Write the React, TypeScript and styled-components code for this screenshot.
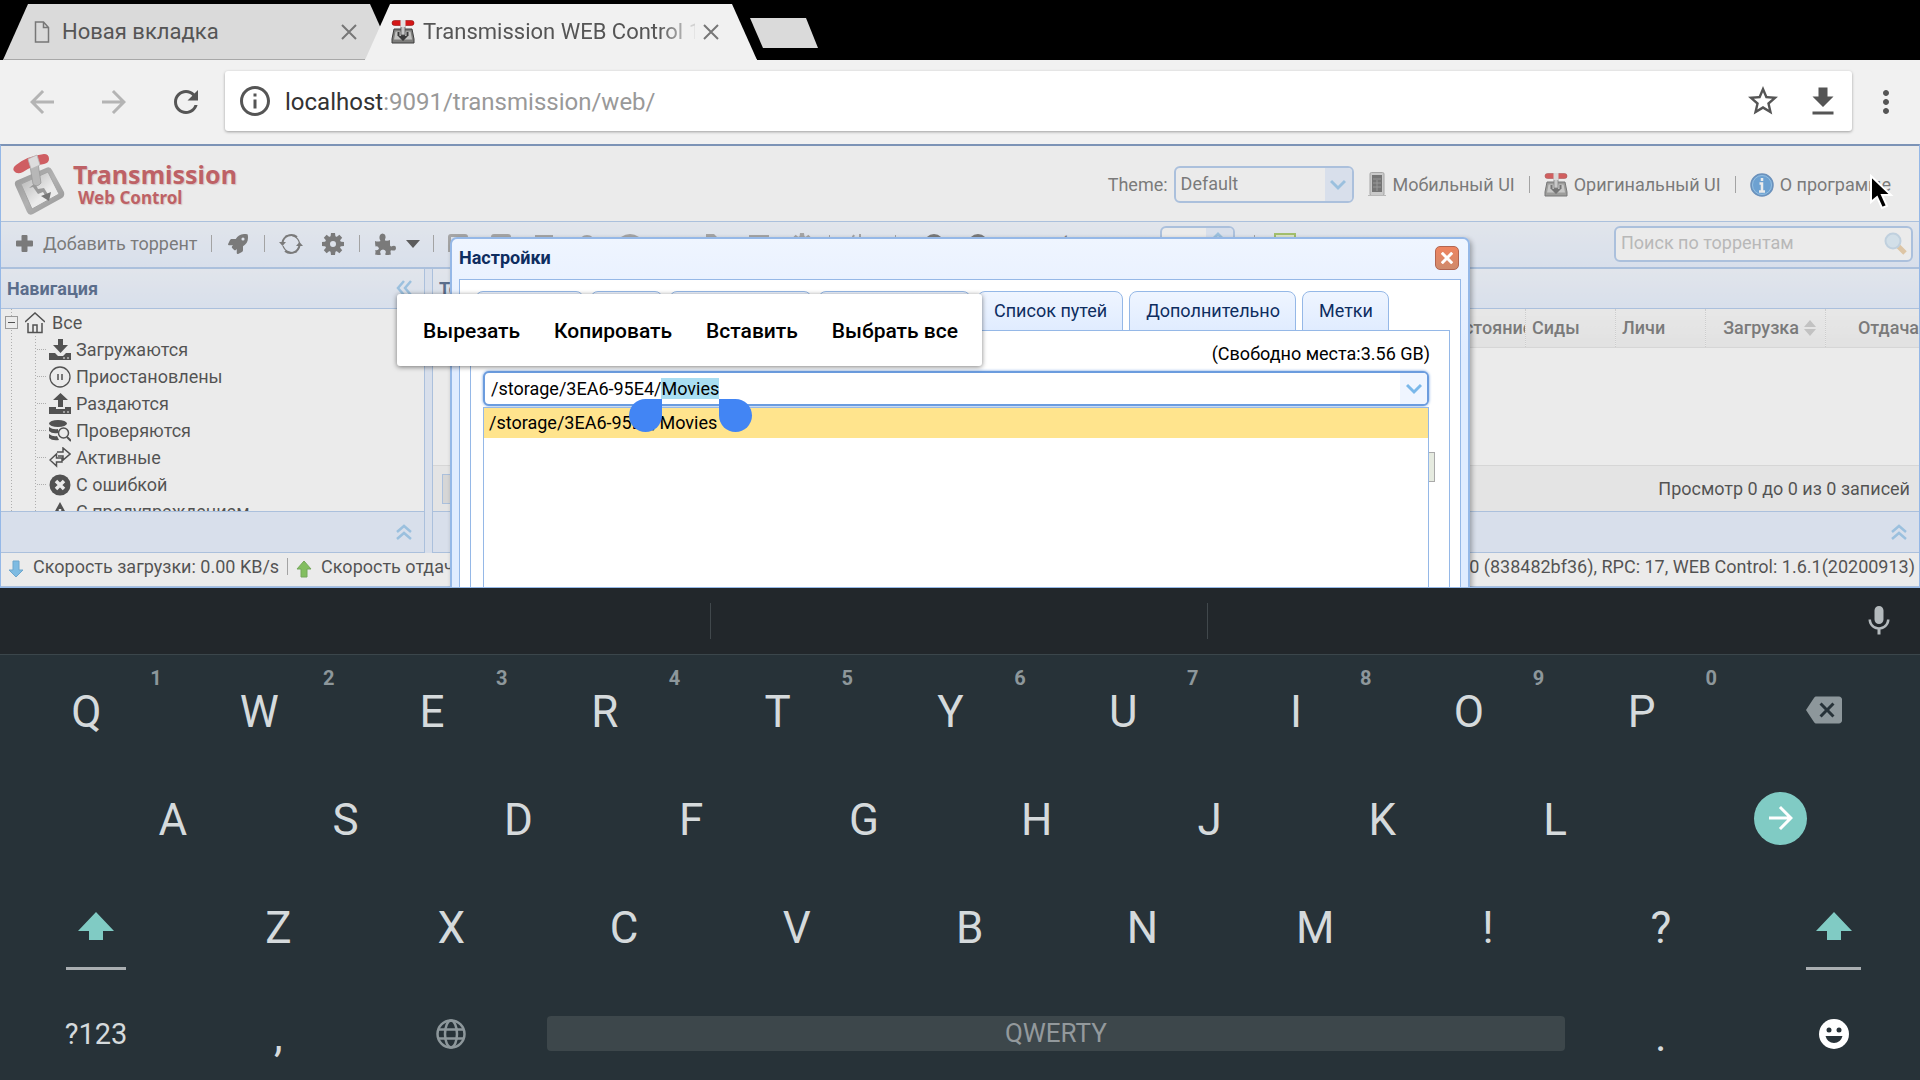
import React, { useEffect, useRef } from "react";
import styled, { createGlobalStyle, css } from "styled-components";
import { FaRocket } from "react-icons/fa";

const line = "#95b8e7";
const navy = "#0e2d5f";

const GlobalStyle = createGlobalStyle`
  * { box-sizing: border-box; }
  html, body { margin: 0; padding: 0; }
  body { font-family: Roboto, "Noto Sans", sans-serif; font-size: 18px; overflow: hidden; }
  button, input, select { font: inherit; color: inherit; }
  button { background: none; border: 0; padding: 0; margin: 0; }
  ul { list-style: none; margin: 0; padding: 0; }
  svg { display: block; flex: none; }
`;

const Screen = styled.div`
  height: 100vh;
  display: flex;
  flex-direction: column;
  position: relative;
  overflow: hidden;
`;

/* ---------- browser chrome ---------- */

const TabStrip = styled.div`
  height: 60px;
  flex: none;
  display: flex;
  align-items: flex-end;
  background: #000;
  padding-left: 3px;
`;

const BrowserTab = styled.div<{ $active?: boolean }>`
  width: 392px;
  height: 56px;
  display: flex;
  align-items: center;
  gap: ${(p) => (p.$active ? 8 : 12)}px;
  padding: 0 38px 0 ${(p) => (p.$active ? 26 : 31)}px;
  margin-left: ${(p) => (p.$active ? -30 : 0)}px;
  clip-path: polygon(25px 0, calc(100% - 25px) 0, 100% 100%, 0 100%);
  background: ${(p) => (p.$active ? "#f1f1f1" : "#dadada")};
  border-bottom: 1px solid ${(p) => (p.$active ? "#f1f1f1" : "#a8a8a8")};
  color: #555;
  font-size: 22px;
`;

const TabTitle = styled.span<{ $fade?: boolean }>`
  flex: 1;
  overflow: hidden;
  white-space: nowrap;
  line-height: 30px;
  ${(p) =>
    p.$fade &&
    css`
      mask-image: linear-gradient(90deg, #000 236px, rgba(0, 0, 0, 0.2) 268px);
    `}
`;

const NewTab = styled.button`
  width: 68px;
  height: 30px;
  margin: 0 0 12px -7px;
  background: #dadada;
  clip-path: polygon(0 0, 56px 0, 100% 100%, 13px 100%);
`;

const AddressBar = styled.div`
  height: 84px;
  flex: none;
  display: flex;
  align-items: center;
  background: #f1f1f1;
  padding-left: 24px;
  padding-right: 16px;
  color: #555;
`;

const NavButton = styled.button`
  width: 36px;
  height: 36px;
  margin-right: 36px;
  &:disabled { color: #b4b4b4; }
`;

const Omnibox = styled.div`
  flex: 1;
  height: 60px;
  margin: 0 16px 2px -15px;
  display: flex;
  align-items: center;
  gap: 24px;
  padding: 0 11px 0 12px;
  background: #fff;
  border-radius: 3px;
  box-shadow: 0 1px 3px rgba(0, 0, 0, 0.35);
`;

const Url = styled.span`
  flex: 1;
  margin-left: -12px;
  padding-top: 2px;
  font-size: 24px;
  color: #999;
  b { font-weight: 400; color: #333; }
`;

/* ---------- web page ---------- */

const Page = styled.main`
  flex: 1;
  min-height: 0;
  display: flex;
  flex-direction: column;
  position: relative;
  overflow: hidden;
  border: 1px solid ${line};
  border-top: 2px solid #7c93b6;
  background: #fff;
  color: #000;
`;

const Header = styled.header`
  height: 75px;
  flex: none;
  display: flex;
  align-items: center;
  padding: 2px 28px 0 12px;
  color: #444;
`;

const Brand = styled.div`
  flex: 1;
  display: flex;
  align-items: center;
  gap: 8px;
`;

const BrandText = styled.div`
  font-family: "Noto Sans", "Open Sans", sans-serif;
  font-weight: 700;
  color: #b41a22;
  text-shadow: 1px 1px 1px rgba(120, 0, 0, 0.25);
`;

const BrandName = styled.div`
  font-size: 25px;
  line-height: 26px;
`;

const BrandSub = styled.div`
  font-size: 17px;
  line-height: 22px;
  padding-left: 5px;
`;

const ThemeLabel = styled.label`
  margin-right: 6px;
`;

const SelectBox = styled.div`
  width: 180px;
  height: 37px;
  display: flex;
  border: 2px solid ${line};
  border-radius: 6px;
  overflow: hidden;
  background: #fff;
  margin-right: 14px;
`;

const PlainSelect = styled.select`
  flex: 1;
  appearance: none;
  border: 0;
  outline: 0;
  background: transparent;
  padding: 0 0 3px 5px;
`;

const ArrowCell = styled.span`
  width: 27px;
  flex: none;
  display: flex;
  align-items: center;
  justify-content: center;
  background: #e0ecff;
`;

const HeaderLink = styled.a`
  display: flex;
  align-items: center;
  gap: 6px;
  color: inherit;
  text-decoration: none;
`;

const Bar = styled.span<{ $gap?: number }>`
  width: 1px;
  height: 17px;
  margin: 0 ${(p) => p.$gap ?? 14}px;
  background: #888;
`;

const Toolbar = styled.div`
  height: 48px;
  flex: none;
  display: flex;
  align-items: center;
  padding: 0 6px 2px 15px;
  color: #444;
  border-top: 1px solid ${line};
  border-bottom: 2px solid ${line};
  background: linear-gradient(#eff5ff, #e0ecff);
`;

const ToolButton = styled.button<{ $w?: number }>`
  min-width: ${(p) => p.$w ?? 24}px;
  display: flex;
  align-items: center;
  justify-content: center;
  gap: 10px;
  white-space: nowrap;
`;

const GearSlot = styled(ToolButton)`
  margin-left: 18px;
`;

const FadedTools = styled.div`
  display: flex;
  align-items: center;
  gap: 21px;
  color: #8a8a8a;
`;

const RefreshGroup = styled.div`
  display: flex;
  align-items: center;
  flex: 1;
  gap: 18px;
  margin-left: 18px;
`;

const AutoLabel = styled.label`
  width: 135px;
  white-space: nowrap;
`;

const Spinner = styled.div`
  width: 75px;
  height: 35px;
  display: flex;
  border: 2px solid ${line};
  border-radius: 6px;
  background: #fff;
  overflow: hidden;
  input {
    width: 44px;
    border: 0;
    outline: 0;
    text-align: center;
    background: transparent;
  }
`;

const StepCell = styled.span`
  flex: 1;
  padding: 3px 0 0 4px;
  background: #e0ecff;
`;

const SearchBox = styled.div`
  width: 299px;
  height: 36px;
  display: flex;
  align-items: center;
  border: 2px solid ${line};
  border-radius: 6px;
  background: #fff;
  padding: 0 4px 0 5px;
  input {
    flex: 1;
    min-width: 0;
    border: 0;
    outline: 0;
    padding: 0 0 2px;
    background: transparent;
  }
  input::placeholder { color: #aaa; opacity: 1; }
`;

const Columns = styled.div`
  flex: 1;
  min-height: 0;
  display: flex;
  background: #e0ecff;
`;

const Column = styled.section`
  display: flex;
  flex-direction: column;
  min-width: 0;
  background: #fff;
`;

const NavColumn = styled(Column)`
  width: 424px;
  flex: none;
  margin-right: 7px;
  border-right: 1px solid ${line};
`;

const MainColumn = styled(Column)`
  flex: 1;
  border-left: 1px solid ${line};
`;

const PanelTitle = styled.h2`
  margin: 0;
  height: 40px;
  flex: none;
  display: flex;
  align-items: center;
  justify-content: space-between;
  padding: 0 12px 1px 6px;
  font-size: 18px;
  font-weight: 700;
  color: ${navy};
  background: linear-gradient(#eff5ff, #e0ecff);
  border-bottom: 1px solid ${line};
`;

const CollapsedPanel = styled.div`
  height: 42px;
  flex: none;
  display: flex;
  align-items: center;
  justify-content: flex-end;
  padding-right: 12px;
  background: #e0ecff;
  border-top: 1px solid ${line};
  border-bottom: 1px solid ${line};
`;

const Tree = styled.ul`
  flex: 1;
  min-height: 0;
  overflow: hidden;
  background:
    repeating-linear-gradient(#999 0 1px, transparent 1px 3px) 10px 0 / 1px 100% no-repeat,
    repeating-linear-gradient(#999 0 1px, transparent 1px 3px) 34px 27px / 1px 100% no-repeat;
`;

const TreeRow = styled.li<{ $root?: boolean }>`
  height: 27px;
  display: flex;
  align-items: center;
  gap: ${(p) => (p.$root ? 7 : 5)}px;
  padding-left: ${(p) => (p.$root ? 4 : 36)}px;
  white-space: nowrap;
`;

const Toggle = styled.button`
  width: 13px;
  height: 13px;
  border: 1px solid #777;
  background: #fff;
  display: flex;
  align-items: center;
  justify-content: center;
  &::before { content: ""; width: 7px; height: 1px; background: #000; }
`;

const Dots = styled.span`
  width: 9px;
  margin-right: -2px;
  border-top: 1px dotted #999;
`;

const GridArea = styled.div`
  flex: 1;
  min-height: 0;
  overflow: hidden;
`;

const Grid = styled.table`
  width: calc(100% + 27px);
  table-layout: fixed;
  border-collapse: collapse;
  color: #444;
`;

const Th = styled.th<{ $w?: number; $right?: boolean }>`
  width: ${(p) => (p.$w ? p.$w + "px" : "auto")};
  height: 38px;
  padding: 0 ${(p) => (p.$right ? 9 : 0)}px 0 6px;
  overflow: hidden;
  white-space: nowrap;
  text-align: ${(p) => (p.$right ? "right" : "left")};
  font-weight: 500;
  background: linear-gradient(#f9f9f9, #efefef);
  border-right: 1px dotted #ccc;
  border-bottom: 1px solid #ddd;
`;

const SortHead = styled.span`
  display: inline-flex;
  align-items: center;
  gap: 5px;
`;

const Pager = styled.div`
  height: 46px;
  flex: none;
  display: flex;
  align-items: center;
  justify-content: space-between;
  padding: 0 9px;
  background: #f4f4f4;
  border-top: 1px solid #ddd;
`;

const PageSize = styled.select`
  width: 64px;
  height: 30px;
  appearance: none;
  border: 1px solid ${line};
  background: #ddd;
  padding-left: 12px;
`;

const StatusBar = styled.footer`
  height: 34px;
  flex: none;
  display: flex;
  align-items: center;
  padding: 0 4px 6px 7px;
  border-bottom: 1px solid ${line};
  white-space: nowrap;
  svg { margin-top: 4px; margin-right: 9px; }
`;

const Push = styled.span`
  flex: 1;
`;

/* ---------- modal window ---------- */

const Mask = styled.div`
  position: absolute;
  inset: 0;
  display: flex;
  justify-content: center;
  align-items: flex-start;
  padding-top: 91px;
  background: rgba(204, 204, 204, 0.4);
`;

const Dialog = styled.section`
  width: 1020px;
  height: 600px;
  flex: none;
  display: flex;
  flex-direction: column;
  padding: 0 7px 7px;
  border: 2px solid ${line};
  border-radius: 7px;
  background: linear-gradient(#eff5ff, #e0ecff 20%);
  box-shadow: 2px 2px 5px rgba(0, 0, 0, 0.3);
`;

const DialogTitle = styled.h1`
  margin: 0;
  height: 40px;
  display: flex;
  align-items: center;
  justify-content: space-between;
  font-size: 18px;
  font-weight: 700;
  color: ${navy};
  padding: 0 2px 3px 0;
`;

const CloseButton = styled.button`
  width: 24px;
  height: 24px;
  display: flex;
  align-items: center;
  justify-content: center;
  border: 1px solid #b26551;
  border-radius: 5px;
  background: linear-gradient(#ef8460, #cf8a6c);
`;

const DialogBody = styled.div`
  flex: 1;
  display: flex;
  flex-direction: column;
  padding: 11px 10px 0;
  border: 1px solid ${line};
  background: #fff;
`;

const TabList = styled.div`
  display: flex;
  gap: 6px;
  padding-left: 5px;
`;

const Tab = styled.button<{ $w?: number }>`
  ${(p) => p.$w && css`width: ${p.$w}px;`}
  height: 40px;
  margin-bottom: -1px;
  padding: 0 15px 1px 16px;
  white-space: nowrap;
  color: ${navy};
  border: 1px solid ${line};
  border-radius: 8px 8px 0 0;
  background: linear-gradient(#eff5ff, #e0ecff);
`;

const TabPanel = styled.div`
  flex: 1;
  border: 1px solid ${line};
  padding: 0 14px 0 12px;
`;

const FieldHead = styled.div`
  height: 40px;
  display: flex;
  align-items: center;
  justify-content: space-between;
  padding: 5px 5px 0 0;
`;

const Combo = styled.div`
  position: relative;
  height: 35px;
  margin-right: 6px;
  display: flex;
  align-items: center;
  border: 2px solid #6b9cde;
  border-radius: 6px;
  background: #fff;
  box-shadow: 0 0 3px #6b9cde;
  input {
    flex: 1;
    border: 0;
    outline: 0;
    height: 21px;
    padding: 0 0 0 6px;
    background: transparent;
  }
  input::selection { background: #a9def2; color: #000; }
`;

const ComboArrow = styled.button`
  width: 27px;
  align-self: stretch;
  display: flex;
  align-items: center;
  justify-content: center;
  background: #eff5ff;
  border-radius: 0 4px 4px 0;
`;

const Options = styled.ul`
  position: absolute;
  top: 34px;
  left: -2px;
  right: -2px;
  height: 300px;
  border: 1px solid ${line};
  background: #fff;
`;

const Option = styled.li`
  height: 30px;
  line-height: 30px;
  padding-left: 5px;
  background: #ffe48d;
`;

const Handle = styled.span<{ $side: "start" | "end" }>`
  position: absolute;
  top: 26px;
  left: ${(p) => (p.$side === "start" ? 144 : 234)}px;
  width: 33px;
  height: 33px;
  background: #4285f4;
  border-radius: ${(p) => (p.$side === "start" ? "50% 0 50% 50%" : "0 50% 50% 50%")};
`;

const CheckButton = styled.button`
  display: block;
  margin: 46px 0 0 auto;
  width: 110px;
  height: 30px;
  background: #e6ebe0;
  border: 1px solid #aaa;
`;

/* ---------- floating system parts ---------- */

const EditMenu = styled.div`
  position: absolute;
  left: 397px;
  top: 294px;
  height: 72px;
  display: flex;
  align-items: center;
  gap: 34px;
  padding: 2px 24px 0 26px;
  background: #fff;
  color: #000;
  border-radius: 3px;
  box-shadow: 0 1px 5px rgba(0, 0, 0, 0.5);
  font-size: 21px;
  font-weight: 500;
  button { white-space: nowrap; }
`;

const Pointer = styled.svg`
  position: absolute;
  right: 26px;
  top: 174px;
`;

/* ---------- on-screen keyboard ---------- */

const Keyboard = styled.section`
  flex: none;
  background: #273238;
  color: #d5dadc;
`;

const Suggestions = styled.div`
  height: 67px;
  display: grid;
  grid-template-columns: 711px 497px 1fr;
  align-items: center;
  background: #22272b;
  border-bottom: 1px solid #3b464b;
`;

const Suggestion = styled.div`
  height: 36px;
  border-right: 1px solid #41484c;
`;

const Mic = styled.button`
  justify-self: end;
  margin-right: 23px;
  color: #b4babd;
`;

const Row = styled.div<{ $indent?: boolean; $last?: boolean }>`
  height: ${(p) => (p.$last ? 101 : 108)}px;
  padding-top: ${(p) => (p.$last ? 8 : 2)}px;
  padding-left: ${(p) => (p.$indent ? "4.5%" : "0")};
  display: flex;
`;

const Key = styled.button<{ $grow?: number }>`
  flex: ${(p) => p.$grow ?? 18} 0 0;
  min-width: 0;
  position: relative;
  display: flex;
  align-items: center;
  justify-content: center;
  color: inherit;
`;

const LetterKey = styled(Key)`
  padding-top: 4px;
  font-size: 44px;
  line-height: 52px;
`;

const SmallKey = styled(Key)`
  font-size: 29px;
`;

const Hint = styled.span`
  position: absolute;
  right: 11px;
  top: 9px;
  font-size: 20px;
  line-height: 24px;
  font-weight: 700;
  color: #8d979b;
`;

const Underline = styled.span`
  position: absolute;
  bottom: 9px;
  width: 60px;
  max-width: 32%;
  height: 3px;
  background: #a9aeb1;
`;

const GoCircle = styled.span`
  width: 53px;
  height: 53px;
  border-radius: 50%;
  background: #80cbc4;
  color: #fff;
  display: flex;
  align-items: center;
  justify-content: center;
`;

const SpaceBar = styled.span`
  flex: 1;
  margin: 0 9px;
  border-radius: 4px;
  background: #3d474b;
  color: #93999c;
  font-size: 26px;
  line-height: 35px;
`;

const DeleteMark = styled.span`
  color: #8d979b;
`;

/* ---------- drawings ---------- */

const shapes = {
  back: "M20 11H7.83l5.59-5.59L12 4l-8 8 8 8 1.41-1.41L7.83 13H20v-2z",
  forward: "M12 4l-1.41 1.41L16.17 11H4v2h12.17l-5.58 5.59L12 20l8-8z",
  reload:
    "M17.65 6.35C16.2 4.9 14.21 4 12 4c-4.42 0-7.99 3.58-7.99 8s3.57 8 7.99 8c3.73 0 6.84-2.55 7.73-6h-2.08c-.82 2.33-3.04 4-5.65 4-3.31 0-6-2.69-6-6s2.69-6 6-6c1.66 0 3.14.69 4.22 1.78L13 11h7V4l-2.35 2.35z",
  star: "M22 9.24l-7.19-.62L12 2 9.19 8.63 2 9.24l5.46 4.73L5.82 21 12 17.27 18.18 21l-1.63-7.03L22 9.24zM12 15.4l-3.76 2.27 1-4.28-3.32-2.88 4.38-.38L12 6.1l1.71 4.04 4.38.38-3.32 2.88 1 4.28L12 15.4z",
  download: "M19 9h-4V3H9v6H5l7 7 7-7zM5 19v2h14v-2H5z",
  more: "M12 8c1.1 0 2-.9 2-2s-.9-2-2-2-2 .9-2 2 .9 2 2 2zm0 2c-1.1 0-2 .9-2 2s.9 2 2 2 2-.9 2-2-.9-2-2-2zm0 6c-1.1 0-2 .9-2 2s.9 2 2 2 2-.9 2-2-.9-2-2-2z",
  info: "M11 17h2v-6h-2v6zm1-15C6.48 2 2 6.48 2 12s4.48 10 10 10 10-4.480 10-10S17.52 2 12 2zm0 18c-4.410 0-8-3.590-8-8s3.590-8 8-8 8 3.590 8 8-3.590 8-8 8zM11 9h2V7h-2v2z",
  mic: "M12 14c1.66 0 2.99-1.34 2.99-3L15 5c0-1.66-1.34-3-3-3S9 3.34 9 5v6c0 1.66 1.34 3 3 3zm5.3-3c0 3-2.54 5.1-5.3 5.1S6.7 14 6.7 11H5c0 3.41 2.72 6.23 6 6.72V21h2v-3.28c3.28-.48 6-3.3 6-6.72h-1.7z",
  backspace:
    "M22 3H7c-.69 0-1.23.35-1.59.88L0 12l5.41 8.11c.36.53.9.89 1.59.89h15c1.1 0 2-.9 2-2V5c0-1.1-.9-2-2-2zm-3 12.59L17.59 17 14 13.41 10.41 17 9 15.59 12.59 12 9 8.41 10.41 7 14 10.59 17.59 7 19 8.41 15.41 12 19 15.59z",
};

const Glyph = ({ name, size = 36 }: { name: keyof typeof shapes; size?: number }) => (
  <svg width={size} height={size} viewBox="0 0 24 24" fill="currentColor" aria-hidden="true">
    <path d={shapes[name]} />
  </svg>
);

const Cross = ({ size = 16, color = "#777", w = 2 }: { size?: number; color?: string; w?: number }) => (
  <svg width={size} height={size} viewBox="0 0 16 16" stroke={color} strokeWidth={w} aria-hidden="true">
    <path d="M1 1l14 14M15 1L1 15" />
  </svg>
);

const PageIcon = () => (
  <svg width="16" height="22" viewBox="0 0 16 22" fill="none" stroke="#777" strokeWidth="1.5" aria-hidden="true">
    <path d="M1.500 1h8l5 5.500V21h-13zM9.500 1v5.500h5" />
  </svg>
);

const GearboxIcon = () => (
  <svg width="24" height="24" viewBox="0 0 24 24" aria-hidden="true">
    <path d="M3 9h18l2 10v4H1v-4z" fill="#7d7d7b" stroke="#3f3f3f" />
    <path d="M4.500 11.500h15l1.500 8H3z" fill="#c3c3c1" />
    <path d="M7.500 12v4M16.500 12v4" stroke="#3a3a3a" strokeWidth="2" />
    <path d="M12 21l-5-5h3v-2h4v2h3z" fill="#3a3a3a" />
    <rect x="10" y="4" width="4" height="11" fill="#c9c9c9" stroke="#555" strokeWidth=".8" />
    <rect x="1" y="0.500" width="22" height="5" rx="2.500" fill="#d41616" stroke="#8e1010" strokeWidth=".6" />
    <rect x="9.500" y="0" width="5" height="7" fill="#e2e2e2" />
  </svg>
);

const LogoIcon = () => (
  <svg width="52" height="62" viewBox="0 0 52 62" aria-hidden="true">
    <defs>
      <linearGradient id="plate" x1="0" y1="0" x2="1" y2="1">
        <stop offset="0" stopColor="#6f6f6f" />
        <stop offset="0.500" stopColor="#a0a0a0" />
        <stop offset="1" stopColor="#6c6c6c" />
      </linearGradient>
      <linearGradient id="face" x1="0" y1="0" x2="1" y2="1">
        <stop offset="0" stopColor="#9a9a9a" />
        <stop offset="0.600" stopColor="#fff" />
      </linearGradient>
    </defs>
    <path d="M5 26q-4 1-3 5l12 27q2 4 6 2l29-16q3-2 2-6L39 16q-2-4-6-2z" fill="url(#plate)" />
    <path d="M8 30l11 25 27-15-11-22z" fill="url(#face)" stroke="#888" />
    <path d="M16 34l6-5 3 6 6-1 5 8-3 1-3-5-5 2-5-7z" fill="#777" />
    <path d="M28 42l10-4-2 9z" fill="#3c3c3c" />
    <path d="M17 12l8-3 3 20q-4 5-8 1z" fill="#a9a9a9" stroke="#777" strokeWidth=".8" />
    <path d="M3 11Q14 2 31 0q5 0 5 5 0 4-5 5-13 2-21 8-6 3-9-1-2-3 2-6z" fill="#d0141b" />
    <path d="M15 5l9-4 3 10-9 4z" fill="#e8e8e8" stroke="#aaa" strokeWidth=".8" />
  </svg>
);

const Chevron = ({ flip }: { flip?: boolean }) => (
  <svg width="16" height="12" viewBox="0 0 16 12" fill="none" stroke="#7ab8ea" strokeWidth="3" aria-hidden="true">
    <path d={flip ? "M1 10l7-7 7 7" : "M1 2l7 7 7-7"} />
  </svg>
);

const DoubleChevron = ({ left }: { left?: boolean }) => (
  <svg width="16" height="16" viewBox="0 0 16 16" fill="none" stroke="#7ab8ea" strokeWidth="2.500" aria-hidden="true">
    <path d={left ? "M8 1L2 8l6 7M15 1L9 8l6 7" : "M1 8l7-6 7 6M1 15l7-6 7 6"} />
  </svg>
);

const PhoneIcon = () => (
  <svg width="19" height="25" viewBox="0 0 19 25" aria-hidden="true">
    <rect x="2" y="0.500" width="14" height="23" rx="1.500" fill="#c8c8c8" stroke="#8c8c8c" />
    <rect x="4" y="3" width="10" height="17" fill="#3b3b3b" />
    <path d="M5 7h8M5 11h8M5 15h8M9 8v11" stroke="#777" />
    <path d="M0 23.500h18" stroke="#aaa" />
  </svg>
);

const BlueInfo = () => (
  <svg width="24" height="24" viewBox="0 0 24 24" aria-hidden="true">
    <circle cx="12" cy="12" r="11" fill="#2d84d4" stroke="#2a69b0" strokeWidth="1.500" />
    <circle cx="12" cy="12" r="9.500" fill="none" stroke="#6db4ee" />
    <path d="M12 5v3M9.500 10.500H12V18M9 18.500h6" stroke="#fff" strokeWidth="2.500" fill="none" />
  </svg>
);

const PlusIcon = () => (
  <svg width="17" height="17" viewBox="0 0 17 17" fill="currentColor" aria-hidden="true">
    <path d="M6.500 0h4q1 0 1 1v4.500H16q1 0 1 1v4q0 1-1 1h-4.500V16q0 1-1 1h-4q-1 0-1-1v-4.500H1q-1 0-1-1v-4q0-1 1-1h4.500V1q0-1 1-1z" />
  </svg>
);

const GearIcon = () => (
  <svg width="22" height="22" viewBox="-11 -11 22 22" fill="currentColor" aria-hidden="true">
    <path
      fillRule="evenodd"
      d="M-8 0a8 8 0 1 0 16 0a8 8 0 1 0-16 0zM-3 0a3 3 0 1 0 6 0a3 3 0 1 0-6 0z"
    />
    {[0, 45, 90, 135, 180, 225, 270, 315].map((a) => (
      <path key={a} d="M-2-11h4l.6 5h-5.200z" transform={`rotate(${a})`} />
    ))}
  </svg>
);

const PuzzleIcon = () => (
  <svg width="22" height="22" viewBox="0 0 22 22" fill="currentColor" aria-hidden="true">
    <path d="M1 8q3 1 5.500 0-.500-1-1-2.500Q5 1 8.500.500 12 1 11.500 5q-.700 1.500-.500 2.500 3 .500 5-.500v5.500q1 1.500 2.500.500 3.500-1 3.500 2t-3.500 2.500q-1.500-.500-2 .500 0 2 .500 3.500-3 .800-5.500.500-.500-1.500.500-3-.500-2.500-3-2.500t-3 2.500q1 1.500.500 3Q4 22 1 21.500q1-3 0-4.500 3 1 4-1.500-1-3-3.500-2Q1 11 1 8z" />
  </svg>
);

const SyncIcon = () => (
  <svg width="24" height="22" viewBox="0 0 24 22" fill="none" stroke="currentColor" strokeWidth="2" aria-hidden="true">
    <path d="M3.500 9.500A9 9 0 0 1 18 4M20.500 12.500A9 9 0 0 1 6 18" />
    <path d="M0 9h7l-3.500 4zM17 13h7l-3.500-4z" fill="currentColor" stroke="none" />
    <path d="M6 3.500A10 10 0 0 1 20.500 10M18 18.500A10 10 0 0 1 4 13" strokeWidth="1.200" />
  </svg>
);

const Caret = () => (
  <svg width="14" height="8" viewBox="0 0 14 8" fill="#111" aria-hidden="true">
    <path d="M0 0h14L7 8z" />
  </svg>
);

const toolShapes = [
  "M4 1h14q3 0 3 3v15H1V4q0-3 3-3zM4 4h14v13H4z",
  "M4 1h14q3 0 3 3v15H1V4q0-3 3-3zM4 4h14v13H4z",
  "M2 2h18v16H2z",
  "M11 2a8 8 0 1 1 0 16 8 8 0 0 1 0-16z",
  "M2 4q9-6 18 0v14H2z",
  "M3 4l3 5M11 8l3 4M17 4l2 6",
  "M1 1h8l3 3h9v14H1z",
  "M1 2h20v2H1zM5 8h12v2H5z",
];

const Lens = () => (
  <svg width="24" height="24" viewBox="0 0 24 24" aria-hidden="true">
    <path d="M15 14l7 7" stroke="#e8c08a" strokeWidth="5" />
    <circle cx="10" cy="9" r="7.500" fill="#d5ebfa" stroke="#b8d3ea" strokeWidth="2" />
  </svg>
);

const SortMark = () => (
  <svg width="12" height="16" viewBox="0 0 12 16" fill="#bbb" aria-hidden="true">
    <path d="M0 7l6-7 6 7zM0 9h12l-6 7z" />
  </svg>
);

const FlowArrow = ({ up }: { up?: boolean }) => (
  <svg width="16" height="18" viewBox="0 0 16 18" aria-hidden="true">
    <path
      d={up ? "M8 1l7 8h-4v8H5V9H1z" : "M8 17l7-7h-4V1H5v9H1z"}
      fill={up ? "#51b416" : "#4ab0f0"}
      stroke={up ? "#3b8d10" : "#2f8ccc"}
    />
  </svg>
);

const HomeIcon = () => (
  <svg width="20" height="22" viewBox="0 0 20 22" fill="none" stroke="#000" strokeWidth="1.500" aria-hidden="true">
    <path d="M0 10L10 1l10 9M3 11v9.500h14V11M8 20v-7h4v7" />
  </svg>
);

const treeIcons: Record<string, React.ReactNode> = {
  down: <path d="M9 0h5v6h5l-7.500 8L4 6h5zM0 14h6l3 3h5l3-3h5v7H0zM14 18.500v1h2v-1zM18 18.500v1h2v-1z" fillRule="evenodd" />,
  pause: (
    <g fill="none" stroke="#000">
      <circle cx="11" cy="11" r="10" strokeWidth="1.300" />
      <path d="M9 8v6M13 8v6" strokeWidth="1.500" />
    </g>
  ),
  up: <path d="M11.500 0L19 7h-5v7H9V7H4zM0 14h7v2h9v-2h6v7H0zM14 18.500v1h2v-1zM18 18.500v1h2v-1z" fillRule="evenodd" />,
  check: (
    <g>
      <ellipse cx="9" cy="3.500" rx="9" ry="3.500" />
      <path d="M0 7q4 3 9 2v4q-6 1-9-2zM0 14q4 3 8 2l2 4q-7 1-10-2z" />
      <circle cx="14.500" cy="13" r="5" fill="none" stroke="#000" strokeWidth="1.500" />
      <path d="M18 17l4 4" stroke="#000" strokeWidth="2" />
    </g>
  ),
  active: (
    <path
      d="M8 6h6V2l7 6-7 6v-4H9M13 12H7.500V8L1 14l6.500 6v-4H13z"
      fill="none"
      stroke="#000"
      strokeWidth="1.500"
      transform="translate(0 -1)"
    />
  ),
  error: (
    <g>
      <circle cx="11" cy="11" r="10.500" />
      <path d="M7 7l8 8M15 7l-8 8" stroke="#fff" strokeWidth="3.500" />
    </g>
  ),
  warn: (
    <g>
      <path d="M11 1l11 20H0z" />
      <path d="M11 8v7M11 17v2" stroke="#fff" strokeWidth="2.500" />
    </g>
  ),
};

const TreeIcon = ({ name }: { name: string }) => (
  <svg width="22" height="22" viewBox="0 0 22 22" aria-hidden="true">
    {treeIcons[name]}
  </svg>
);

const GlobeIcon = () => (
  <svg width="30" height="30" viewBox="0 0 30 30" fill="none" stroke="#8d979b" strokeWidth="2.500" aria-hidden="true">
    <circle cx="15" cy="15" r="13.500" />
    <ellipse cx="15" cy="15" rx="6" ry="13.500" />
    <path d="M3 10.500h24M3 19.500h24" />
  </svg>
);

const SmileIcon = () => (
  <svg width="30" height="30" viewBox="0 0 30 30" aria-hidden="true">
    <circle cx="15" cy="15" r="15" fill="#fff" />
    <circle cx="10" cy="11" r="2.500" fill="#273238" />
    <circle cx="20" cy="11" r="2.500" fill="#273238" />
    <path d="M6.500 17h17q-2 7-8.500 7t-8.500-7z" fill="#273238" />
  </svg>
);

const ShiftArrow = () => (
  <svg width="36" height="28" viewBox="0 0 36 28" fill="#80cbc4" aria-hidden="true">
    <path d="M18 0l18 19H25v9H11v-9H0z" />
  </svg>
);

/* ---------- data ---------- */

const filters = [
  ["down", "Загружаются"],
  ["pause", "Приостановлены"],
  ["up", "Раздаются"],
  ["check", "Проверяются"],
  ["active", "Активные"],
  ["error", "С ошибкой"],
  ["warn", "С предупреждением"],
];

const settingsTabs: [string, number?][] = [
  ["Загрузка", 109],
  ["Сеть", 73],
  ["Ограничения", 143],
  ["Планировщик", 153],
  ["Список путей"],
  ["Дополнительно"],
  ["Метки"],
];

const folder = "/storage/3EA6-95E4/Movies";

function FolderCombo() {
  const input = useRef<HTMLInputElement>(null);
  useEffect(() => {
    input.current?.focus();
    input.current?.setSelectionRange(folder.lastIndexOf("/") + 1, folder.length);
  }, []);
  return (
    <Combo>
      <input id="folder" ref={input} defaultValue={folder} />
      <ComboArrow aria-label="Открыть список">
        <Chevron />
      </ComboArrow>
      <Options>
        <Option>{folder}</Option>
      </Options>
      <Handle $side="start" />
      <Handle $side="end" />
    </Combo>
  );
}

export default function App() {
  return (
    <Screen>
      <GlobalStyle />
      <TabStrip>
        <BrowserTab>
          <PageIcon />
          <TabTitle>Новая вкладка</TabTitle>
          <button aria-label="Закрыть вкладку"><Cross /></button>
        </BrowserTab>
        <BrowserTab $active>
          <GearboxIcon />
          <TabTitle $fade>Transmission WEB Control 1.6.1</TabTitle>
          <button aria-label="Закрыть вкладку"><Cross /></button>
        </BrowserTab>
        <NewTab aria-label="Новая вкладка" />
      </TabStrip>
      <AddressBar>
        <NavButton disabled aria-label="Назад"><Glyph name="back" /></NavButton>
        <NavButton disabled aria-label="Вперёд"><Glyph name="forward" /></NavButton>
        <NavButton aria-label="Обновить"><Glyph name="reload" /></NavButton>
        <Omnibox>
          <Glyph name="info" />
          <Url><b>localhost</b>:9091/transmission/web/</Url>
          <button aria-label="В закладки"><Glyph name="star" /></button>
          <button aria-label="Скачать"><Glyph name="download" /></button>
        </Omnibox>
        <button aria-label="Меню"><Glyph name="more" /></button>
      </AddressBar>

      <Page>
        <Header>
          <Brand>
            <LogoIcon />
            <BrandText>
              <BrandName>Transmission</BrandName>
              <BrandSub>Web Control</BrandSub>
            </BrandText>
          </Brand>
          <ThemeLabel htmlFor="theme">Theme:</ThemeLabel>
          <SelectBox>
            <PlainSelect id="theme"><option>Default</option></PlainSelect>
            <ArrowCell><Chevron /></ArrowCell>
          </SelectBox>
          <HeaderLink href="#mobile"><PhoneIcon />Мобильный UI</HeaderLink>
          <Bar />
          <HeaderLink href="#original"><GearboxIcon />Оригинальный UI</HeaderLink>
          <Bar />
          <HeaderLink href="#about"><BlueInfo />О программе</HeaderLink>
        </Header>

        <Toolbar>
          <ToolButton><PlusIcon />Добавить торрент</ToolButton>
          <Bar />
          <ToolButton aria-label="Запустить все"><FaRocket size={20} /></ToolButton>
          <Bar />
          <ToolButton aria-label="Обновить список"><SyncIcon /></ToolButton>
          <GearSlot aria-label="Параметры"><GearIcon /></GearSlot>
          <Bar />
          <ToolButton aria-label="Плагины"><PuzzleIcon />
            <Caret />
          </ToolButton>
          <Bar $gap={13} />
          <FadedTools>
            {toolShapes.map((d, i) => (
              <svg key={i} width="22" height="22" viewBox="0 0 22 22" fill="currentColor" fillRule="evenodd" aria-hidden="true">
                <path d={d} />
              </svg>
            ))}
            <GearIcon />
            <Bar $gap={-5} />
            <svg width="22" height="22" viewBox="0 0 22 22" stroke="currentColor" strokeWidth="2" aria-hidden="true">
              <path d="M8 2L5 8M14 1v18" />
            </svg>
            <Bar $gap={6} />
            <svg width="66" height="22" viewBox="0 0 66 22" fill="#444" aria-hidden="true">
              <circle cx="11" cy="11" r="10" />
              <circle cx="55" cy="11" r="10" />
            </svg>
          </FadedTools>
          <RefreshGroup>
            <AutoLabel htmlFor="interval">Автообновление:</AutoLabel>
            <Spinner>
              <input id="interval" defaultValue="5" />
              <StepCell><Chevron flip /></StepCell>
            </Spinner>
            <Bar $gap={1} />
            <svg width="22" height="22" viewBox="0 0 22 22" fill="#e9f5c8" stroke="#86b52c" strokeWidth="2" aria-hidden="true">
              <rect x="1" y="1" width="20" height="20" />
            </svg>
            <span>О</span>
          </RefreshGroup>
          <SearchBox>
            <input aria-label="Поиск" placeholder="Поиск по торрентам" />
            <Lens />
          </SearchBox>
        </Toolbar>

        <Columns>
          <NavColumn>
            <PanelTitle>
              Навигация
              <DoubleChevron left />
            </PanelTitle>
            <Tree>
              <TreeRow $root>
                <Toggle aria-label="Свернуть" />
                <HomeIcon />
                Все
              </TreeRow>
              {filters.map(([icon, label]) => (
                <TreeRow key={label}>
                  <Dots />
                  <TreeIcon name={icon} />
                  {label}
                </TreeRow>
              ))}
            </Tree>
            <CollapsedPanel><DoubleChevron /></CollapsedPanel>
          </NavColumn>
          <MainColumn>
            <PanelTitle>Торренты</PanelTitle>
            <GridArea>
              <Grid>
                <thead>
                  <tr>
                    <Th>Название</Th>
                    <Th $w={90}>Состояние</Th>
                    <Th $w={90}>Сиды</Th>
                    <Th $w={90}>Личи</Th>
                    <Th $w={120} $right><SortHead>Загрузка<SortMark /></SortHead></Th>
                    <Th $w={120} $right><SortHead>Отдача<SortMark /></SortHead></Th>
                  </tr>
                </thead>
              </Grid>
            </GridArea>
            <Pager>
              <PageSize aria-label="Записей на странице"><option>50</option></PageSize>
              <span>Просмотр 0 до 0 из 0 записей</span>
            </Pager>
            <CollapsedPanel><DoubleChevron /></CollapsedPanel>
          </MainColumn>
        </Columns>

        <StatusBar>
          <FlowArrow />
          <span>Скорость загрузки: 0.00 KB/s</span>
          <Bar $gap={8} />
          <FlowArrow up />
          <span>Скорость отдачи: 0.00 KB/s</span>
          <Push />
          <span>Версия Transmission: 3.00 (838482bf36), RPC: 17, WEB Control: 1.6.1(20200913)</span>
        </StatusBar>

        <Mask>
          <Dialog role="dialog" aria-label="Настройки">
            <DialogTitle>
              Настройки
              <CloseButton aria-label="Закрыть"><Cross size={12} color="#fff" w={4} /></CloseButton>
            </DialogTitle>
            <DialogBody>
              <TabList role="tablist">
                {settingsTabs.map(([label, w]) => (
                  <Tab key={label} role="tab" $w={w}>{label}</Tab>
                ))}
              </TabList>
              <TabPanel>
                <FieldHead>
                  <label htmlFor="folder">Папка загрузки:</label>
                  <span>(Свободно места:3.56 GB)</span>
                </FieldHead>
                <FolderCombo />
                <CheckButton aria-label="Проверить" />
              </TabPanel>
            </DialogBody>
          </Dialog>
        </Mask>
      </Page>

      <Keyboard aria-label="Клавиатура">
        <Suggestions>
          <Suggestion />
          <Suggestion />
          <Mic aria-label="Голосовой ввод"><Glyph name="mic" /></Mic>
        </Suggestions>
        <Row>
          {"QWERTYUIOP".split("").map((c, i) => (
            <LetterKey key={c}>{c}<Hint>{(i + 1) % 10}</Hint></LetterKey>
          ))}
          <Key $grow={20} aria-label="Стереть"><DeleteMark><Glyph name="backspace" /></DeleteMark></Key>
        </Row>
        <Row $indent>
          {"ASDFGHJKL".split("").map((c) => <LetterKey key={c}>{c}</LetterKey>)}
          <Key $grow={29} aria-label="Перейти"><GoCircle><Glyph name="forward" /></GoCircle></Key>
        </Row>
        <Row>
          <Key $grow={20} aria-label="Shift"><ShiftArrow /><Underline /></Key>
          {"ZXCVBNM!?".split("").map((c) => <LetterKey key={c}>{c}</LetterKey>)}
          <Key aria-label="Shift"><ShiftArrow /><Underline /></Key>
        </Row>
        <Row $last>
          <SmallKey $grow={20}>?123</SmallKey>
          <LetterKey>,</LetterKey>
          <Key aria-label="Сменить язык"><GlobeIcon /></Key>
          <Key $grow={108}><SpaceBar>QWERTY</SpaceBar></Key>
          <LetterKey>.</LetterKey>
          <Key aria-label="Эмодзи"><SmileIcon /></Key>
        </Row>
      </Keyboard>

      <EditMenu role="menu">
        <button role="menuitem">Вырезать</button>
        <button role="menuitem">Копировать</button>
        <button role="menuitem">Вставить</button>
        <button role="menuitem">Выбрать все</button>
      </EditMenu>
      <Pointer width="25" height="36" viewBox="0 0 25 36" aria-hidden="true">
        <path d="M2 2v26l6-5 5 11 5-2-5-11h9z" fill="#000" stroke="#fff" strokeWidth="2" />
      </Pointer>
    </Screen>
  );
}
